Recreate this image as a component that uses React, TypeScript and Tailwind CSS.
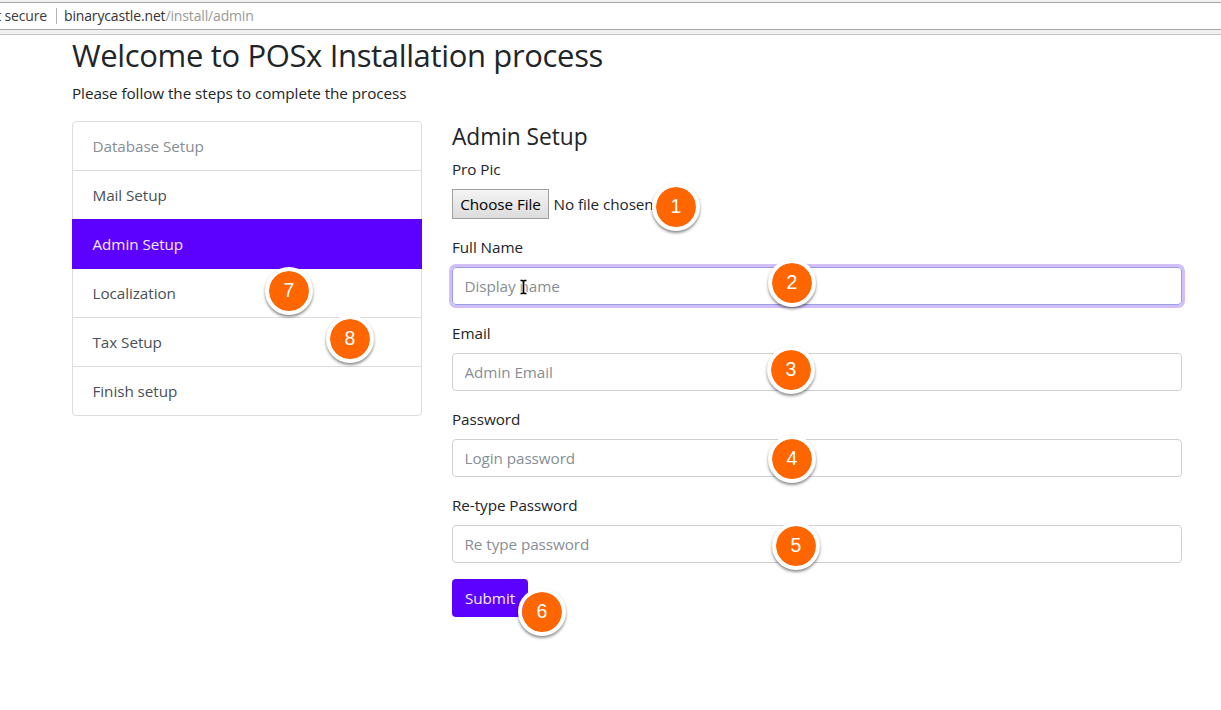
const steps = [
  { label: "Database Setup", cls: "text-[#868e96] border-b border-[#dcdde0]" },
  { label: "Mail Setup", cls: "text-[#495057] pb-[1px]" },
  { label: "Admin Setup", cls: "text-[#f4ecff]", active: true },
  { label: "Localization", cls: "text-[#495057] border-b border-[#dcdde0]" },
  { label: "Tax Setup", cls: "text-[#495057] border-b border-[#dcdde0]" },
  { label: "Finish setup", cls: "text-[#495057] pb-[1px]" },
];

const fields = [
  { label: "Full Name", placeholder: "Display name", focused: true },
  { label: "Email", placeholder: "Admin Email" },
  { label: "Password", placeholder: "Login password" },
  { label: "Re-type Password", placeholder: "Re type password" },
];

const badges = [
  { n: 1, pos: "left-[652px] top-[183px]" },
  { n: 2, pos: "left-[768px] top-[259px]" },
  { n: 3, pos: "left-[767px] top-[346px]" },
  { n: 4, pos: "left-[768px] top-[435px]" },
  { n: 5, pos: "left-[772px] top-[522px]" },
  { n: 6, pos: "left-[518px] top-[588px]" },
  { n: 7, pos: "left-[265px] top-[267px]" },
  { n: 8, pos: "left-[326px] top-[315px]" },
];

function AddressBar() {
  return (
    <header className="h-[35px] shrink-0 border-b border-[#c8c8c8] bg-[#f0f0f0] pt-[2px]">
      <div className="flex h-[28px] items-center border-y border-[#a9aaa6] bg-white text-[14px] tracking-[-0.15px] whitespace-nowrap">
        <div className="flex w-[47px] justify-end overflow-hidden text-[#3c3c3c]">t secure</div>
        <div className="ml-[9px] h-4 w-px bg-[#b4b4b4]" />
        <div className="ml-[7px] text-[#333]">
          binarycastle.net<span className="text-[#999]">/install/admin</span>
        </div>
      </div>
    </header>
  );
}

function StepList() {
  return (
    <ul className="h-[295px] w-[350px] shrink-0 rounded border border-[#dcdde0]">
      {steps.map((s) => (
        <li
          key={s.label}
          className={`flex items-center ${s.cls} ${
            s.active ? "-mx-px -mt-px h-[50px] bg-[#5c00ff] px-[20.5px]" : "h-[49px] px-[19.5px]"
          }`}
        >
          {s.label}
        </li>
      ))}
    </ul>
  );
}

function TextCursor() {
  return (
    <svg className="absolute left-[519px] top-[279px]" width="9" height="16" viewBox="0 0 9 16" fill="none">
      <path d="M1 1.5H3.5L4.5 2.5L5.5 1.5H8M4.5 2.5V13.5M1 14.5H3.5L4.5 13.5L5.5 14.5H8" stroke="#fff" strokeWidth="3.4" />
      <path d="M1.5 1.5H3.5L4.5 2.5L5.5 1.5H7.5M4.5 2.5V13.5M1.5 14.5H3.5L4.5 13.5L5.5 14.5H7.5" stroke="#000" strokeWidth="1.7" />
    </svg>
  );
}

export default function App() {
  return (
    <div className="relative flex h-[710px] w-[1221px] flex-col overflow-hidden bg-white font-['Open_Sans','Noto_Sans',sans-serif] text-[15.25px] leading-6 tracking-[-0.06px] text-[#212529]">
      <AddressBar />
      <main className="pt-px pr-[39px] pl-[72px]">
        <h1 className="h-[38px] text-[31px] leading-[38px] tracking-[-0.35px]">Welcome to POSx Installation process</h1>
        <p className="mt-[7px] h-6">Please follow the steps to complete the process</p>
        <div className="mt-4 flex gap-[30px]">
          <StepList />
          <form className="w-[730px]">
            <h2 className="mt-px h-[29px] text-[22.75px] leading-[29px]">Admin Setup</h2>
            <label className="mt-[6px] block h-6">Pro Pic</label>
            <div className="mt-2 flex h-[30px] items-center">
              <button type="button" className="h-[30px] w-[97px] border border-[#a0a0a0] bg-linear-to-b from-[#f4f4f4] to-[#dcdcdc] whitespace-nowrap text-black">
                Choose File
              </button>
              <span className="ml-[4.5px]">No file chosen</span>
            </div>
            <div className="mt-4 flex flex-col gap-4">
              {fields.map((f) => (
                <label key={f.label} className="block">
                  <span className="block h-6">{f.label}</span>
                  <input
                    placeholder={f.placeholder}
                    className={`mt-2 block h-[38px] w-full rounded border px-[11.5px] placeholder:text-[#868e96] ${
                      f.focused ? "border-[#9a9ee8] shadow-[0_0_0_3px_#d3bff8]" : "border-[#ced0d4]"
                    }`}
                  />
                </label>
              ))}
            </div>
            <button type="button" className="mt-4 h-[38px] w-[76px] rounded bg-[#5c00ff] text-[#f4ecff]">
              Submit
            </button>
          </form>
        </div>
      </main>
      <TextCursor />
      {badges.map((b) => (
        <div
          key={b.n}
          className={`absolute flex size-12 items-center justify-center rounded-full border-4 border-white bg-[#ff6600] bg-clip-padding pb-[2px] font-['Liberation_Sans',sans-serif] text-[19.5px] tracking-normal text-white shadow-[0_2px_3px_rgba(0,0,0,0.45)] ${b.pos}`}
        >
          {b.n}
        </div>
      ))}
    </div>
  );
}
